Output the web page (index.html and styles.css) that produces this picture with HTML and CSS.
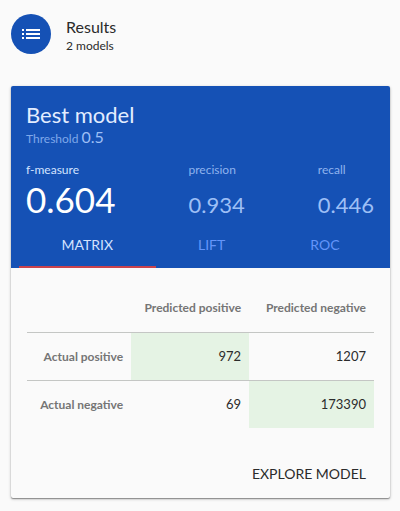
FILE: index.html
```html
<!DOCTYPE html>
<html lang="en">
<head>
    <meta charset="UTF-8">
    <meta name="viewport" content="width=device-width, initial-scale=1.0">
    <title>Results</title>
    <link rel="stylesheet" href="styles.css">
</head>
<body>
    <header class="page-header">
        <div class="avatar">
            <svg width="24" height="24" viewBox="0 0 24 24" fill="#fff" aria-hidden="true">
                <path d="M3 13h2v-2H3v2zm0 4h2v-2H3v2zm0-8h2V7H3v2zm4 4h14v-2H7v2zm0 4h14v-2H7v2zM7 7v2h14V7H7z"/>
            </svg>
        </div>
        <div>
            <h1 class="page-title">Results</h1>
            <div class="page-subtitle">2 models</div>
        </div>
    </header>

    <main class="card">
        <div class="card-top">
            <div class="summary">
                <h2 class="card-title">Best model</h2>
                <div class="threshold">Threshold <span class="threshold-value">0.5</span></div>
                <div class="metrics">
                    <div class="metric active">
                        <div class="metric-name">f-measure</div>
                        <div class="metric-value">0.604</div>
                    </div>
                    <div class="metric">
                        <div class="metric-name">precision</div>
                        <div class="metric-value">0.934</div>
                    </div>
                    <div class="metric">
                        <div class="metric-name">recall</div>
                        <div class="metric-value">0.446</div>
                    </div>
                </div>
            </div>
            <div class="tabs" role="tablist">
                <button type="button" class="tab active" role="tab" aria-selected="true">MATRIX</button>
                <button type="button" class="tab" role="tab" aria-selected="false">LIFT</button>
                <button type="button" class="tab" role="tab" aria-selected="false">ROC</button>
            </div>
        </div>

        <div class="card-body">
            <table class="matrix">
                <thead>
                    <tr>
                        <td></td>
                        <th scope="col">Predicted positive</th>
                        <th scope="col">Predicted negative</th>
                    </tr>
                </thead>
                <tbody>
                    <tr>
                        <th scope="row">Actual positive</th>
                        <td class="hit">972</td>
                        <td>1207</td>
                    </tr>
                    <tr>
                        <th scope="row">Actual negative</th>
                        <td>69</td>
                        <td class="hit">173390</td>
                    </tr>
                </tbody>
            </table>
        </div>

        <div class="card-actions">
            <button type="button" class="explore">EXPLORE MODEL</button>
        </div>
    </main>
</body>
</html>
```
FILE: styles.css
```css
* {
    box-sizing: border-box;
}
body {
    font-family: Lato, sans-serif;
    background-color: #fafafa;
    color: #2b2b2b;
    margin: 0;
    padding: 14px 10px 12px 11px;
}
button {
    font-family: inherit;
    background: none;
    border: none;
    cursor: pointer;
}
.page-header {
    display: flex;
    gap: 15px;
    margin-bottom: 31px;
}
.avatar {
    display: flex;
    align-items: center;
    justify-content: center;
    width: 40px;
    height: 40px;
    border-radius: 50%;
    background-color: #1551b5;
}
.page-title {
    margin: 3px 0 0;
    font-size: 16px;
    font-weight: 400;
    line-height: 20px;
}
.page-subtitle {
    font-size: 12px;
    line-height: 18px;
}
.card {
    border-radius: 2px;
    box-shadow: 0 1px 3px rgba(0, 0, 0, 0.3), 0 1px 1px rgba(0, 0, 0, 0.3);
    overflow: hidden;
}
.card-top {
    background-color: #1551b5;
    color: #e3edff;
}
.summary {
    padding: 16px 16px 0 15px;
}
.card-title {
    margin: 0;
    font-size: 22px;
    font-weight: 400;
    line-height: 26px;
}
.threshold {
    font-size: 12px;
    line-height: 18px;
    color: #7fa8ea;
}
.threshold-value {
    font-size: 16px;
    color: #9dbff5;
}
.metrics {
    display: flex;
    justify-content: space-between;
    margin-top: 14px;
}
.metric {
    color: #9dbff5;
}
.metric-name {
    font-size: 12px;
    line-height: 16px;
    color: #8fb3ee;
}
.metric-value {
    font-size: 22px;
    line-height: 34px;
    padding-top: 10px;
}
.metric.active .metric-name {
    color: #d3e3ff;
}
.metric.active .metric-value {
    color: #fff;
    font-size: 35px;
    line-height: 42px;
    padding-top: 0;
}
.tabs {
    display: flex;
    padding: 0 8px;
}
.tab {
    flex: 1 1 auto;
    height: 46px;
    padding: 0;
    border-bottom: 2px solid transparent;
    font-size: 14px;
    color: #6495fa;
}
.tab.active {
    border-bottom-color: #c9434d;
    color: #d3e3ff;
}
.card-body {
    padding: 16px 16px 0;
}
.matrix {
    width: 100%;
    border-collapse: collapse;
    table-layout: fixed;
    text-align: right;
}
.matrix td:first-child {
    width: 30%;
}
.matrix th:nth-child(2) {
    width: 34%;
}
.matrix th,
.matrix td {
    height: 48px;
    padding: 0 8px;
    font-size: 13px;
}
.matrix th {
    font-size: 12px;
    font-weight: 700;
    color: #757575;
}
.matrix tbody tr {
    border-top: 1px solid #c4c6c4;
}
.matrix .hit {
    background-color: #e5f3e4;
}
.card-actions {
    display: flex;
    justify-content: flex-end;
    padding: 27px 16px 7px;
}
.explore {
    height: 36px;
    padding: 0 8px;
    font-size: 14px;
    color: #2b2b2b;
}
```
